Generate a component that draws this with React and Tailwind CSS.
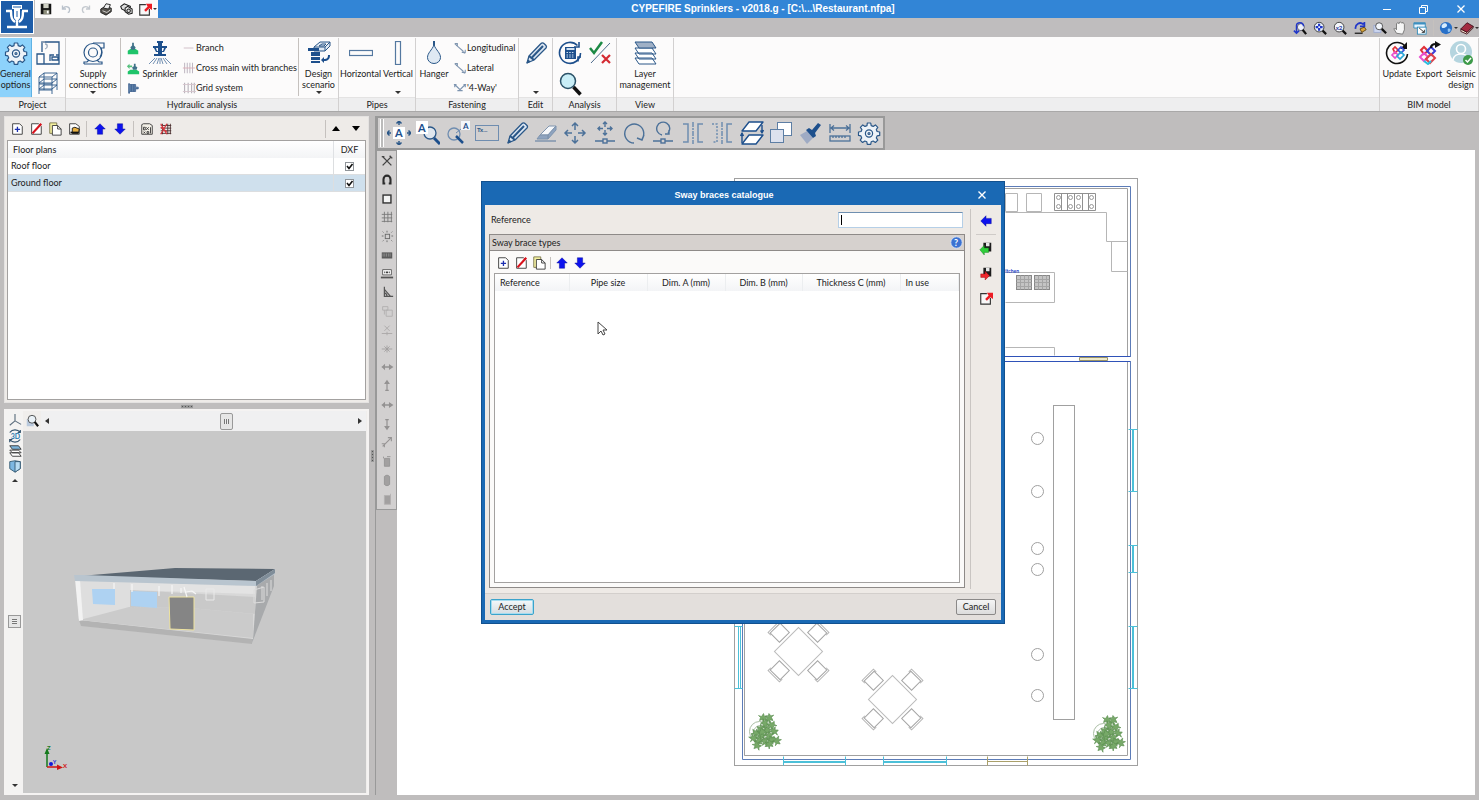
import { useState } from 'react'

const NAVY = '#2a5788'

// 24px line icons used by the ribbon and the editing toolbar
const big = {
  gear: (
    <g fill="none" stroke={NAVY} strokeWidth="1.2" strokeLinejoin="round">
      <path d="M10.3 2h3.4l.5 2.6 2 .8 2.2-1.5 2.4 2.4-1.5 2.2.8 2 2.6.5v3.4l-2.6.5-.8 2 1.5 2.2-2.4 2.4-2.2-1.5-2 .8-.5 2.6h-3.4l-.5-2.6-2-.8-2.2 1.5-2.4-2.4 1.5-2.2-.8-2L1.5 14.4V11l2.6-.5.8-2L3.4 6.3l2.4-2.4L8 5.4l2-.8z" fill="#eef3f8" />
      <circle cx="12" cy="12.5" r="3.6" />
      <circle cx="12" cy="12.5" r="1" />
    </g>
  ),
  plan: (
    <g fill="none" stroke={NAVY} strokeWidth="1.3">
      <path d="M6 11V1h17v22H1V13h7v7M8 20v3M14 20v-6h4M23 14h-3M16 16h6v3h-6z" />
      <path d="M6 1h3M9 3c3 0 3 4 0 5" stroke="#9aa9ba" />
    </g>
  ),
  frame: (
    <path d="M3 23V6l5-4h13v17M3 6h13v17M16 6l5-4M3 12h13l5-4M3 18h13l5-4M3 12l5-4M3 18l5-4M8 2v17M3 13h13M3 19h13M8 8h13M8 14h13" fill="none" stroke={NAVY} strokeWidth="0.9" />
  ),
  pump: (
    <g fill="none" stroke={NAVY} strokeWidth="1.2">
      <path d="M12 2h11v5h-3M3 23h18v-2h-3l-2-2M3 23v-2h3l2-2" />
      <circle cx="12" cy="11.5" r="9" />
      <circle cx="12" cy="11.5" r="4.5" />
      <path d="M20 7c1 3 1 6-1 9" />
    </g>
  ),
  sprinkler: (
    <g>
      <path d="M9 0h6v2h-1v3h5v2h-1l-2 4h-2v2h4v2H6v-2h4v-2H8L6 7H5V5h5V2H9zM8 7l1 3h1V7zM14 7v3h1l1-3z" fill="#1d4f8c" />
      <path d="M7 17l-6 6M9 17l-4 6M11 17l-2 6M12 17v6M13 17l2 6M15 17l4 6M17 17l6 6" stroke="#7592b4" fill="none" />
    </g>
  ),
  design: (
    <g>
      <path d="M7 6l6-5h10v4l-5 5H7zM7 6h11l5-5M18 6v4M12 5l3-2h4l-2 2z" fill="#dfe8f2" stroke={NAVY} />
      <path d="M1 7h11v3H1zM4 11h9v4H4zM4 16h9v3H4zM4 20h9v2H4z" fill="#1d4f8c" />
      <path d="M23 14c0 4-2 6-6 6v2l-3-3 3-3v2c3 0 4-1 4-4z" fill="#1d4f8c" />
    </g>
  ),
  horizontal: <rect x="0.5" y="9.5" width="23" height="5" fill="none" stroke="#5478a0" strokeWidth="1.2" />,
  vertical: <rect x="9.5" y="0.5" width="5" height="23" fill="none" stroke="#5478a0" strokeWidth="1.2" />,
  hanger: (
    <g fill="none" stroke={NAVY}>
      <path d="M12 0v5" strokeWidth="2" />
      <path d="M12 4C10 9 5.5 12 5.5 16.5a6.5 6 0 0 0 13 0C18.5 12 14 9 12 4z" fill="#dfe9f3" />
    </g>
  ),
  pencil: (
    <g stroke={NAVY} strokeLinejoin="round">
      <path d="M3 22l2-7L17 2.5a2 2 0 0 1 3 0l2 2a2 2 0 0 1 0 2.5L10 19z" fill="#dce6f2" strokeWidth="1.3" />
      <path d="M5 15l5 4M7.5 17L19 5" strokeWidth="2" fill="none" />
      <path d="M3 22l1-3 2 1.5z" fill={NAVY} />
    </g>
  ),
  calc: (
    <g fill="none" stroke="#1d4f8c" strokeWidth="1.6">
      <path d="M19.5 4.5A10.5 10.5 0 1 0 22.5 12M21 1v5h-5" />
      <path d="M20 20.5V16h3" />
      <rect x="7" y="6" width="11" height="12" fill="#1d4f8c" stroke="none" />
      <path d="M8.5 8h8" stroke="#cfe0f2" strokeWidth="2" />
      <path d="M8.5 11.5h8M8.5 14h8M8.5 16h8" stroke="#cfe0f2" strokeWidth="1" strokeDasharray="1.5 1.2" />
    </g>
  ),
  checks: (
    <g fill="none">
      <path d="M2 7l4 5 8-11" stroke="#1d8a45" strokeWidth="2.5" />
      <path d="M3 22L22 2" stroke="#4d6b8c" strokeWidth="1" />
      <path d="M14 14l8 8M22 14l-8 8" stroke="#d42a32" strokeWidth="2.2" />
    </g>
  ),
  magnifier: (
    <g>
      <circle cx="10" cy="9" r="7.5" fill="#c9eef7" stroke="#2b5268" strokeWidth="1.5" />
      <path d="M15.5 15l7 7.5" stroke="#111" strokeWidth="3.5" />
    </g>
  ),
  layers: (
    <g stroke={NAVY} strokeLinejoin="round">
      <path d="M2 17l4 6h17l-4-6zM2 12l4 6h17l-4-6zM2 7l4 6h17l-4-6z" fill="#fff" />
      <path d="M2 1h17l4 6H6z" fill="#9fb0c6" />
    </g>
  ),
  update: (
    <g fill="none">
      <path d="M21 6.5A10.5 10.5 0 1 0 22.5 13" stroke="#111" strokeWidth="1.6" />
      <path d="M22 1v7h-7z" fill="#111" />
      <g strokeWidth="1.7">
        <path d="M8 8l2-2 3 3-3 3z" stroke="#e03038" />
        <path d="M13 9l3-3 3 3-3 3z" stroke="#3b4fd8" />
        <path d="M7 14l3-3 3 3-3 3z" stroke="#e94fd0" />
        <path d="M12 15l4-4 3 3-4 4z" stroke="#2aa9d8" />
      </g>
    </g>
  ),
  export: (
    <g fill="none">
      <g strokeWidth="2">
        <path d="M4 9l3-3 4 4-4 3z" stroke="#e03038" />
        <path d="M10 10l4-4 4 4-4 4z" stroke="#3b3fd8" />
        <path d="M3 16l4-4 4 4-4 4z" stroke="#e94fd0" />
        <path d="M9 18l5-5 4 4-5 5z" stroke="#e0404a" />
        <path d="M7 20l4 3 3-3" stroke="#2ac0e0" />
      </g>
      <path d="M14 7c0-3 2-4 5-4" stroke="#111" strokeWidth="2.2" />
      <path d="M18 0l6 3.5-6 3.5z" fill="#111" />
    </g>
  ),
  seismic: (
    <g>
      <circle cx="12" cy="11" r="11" fill="#b5d5df" />
      <circle cx="12" cy="8" r="4.5" fill="#b5d5df" stroke="#fff" strokeWidth="1.6" />
      <path d="M4 19c1-8 15-8 16 0" fill="#b5d5df" stroke="#fff" strokeWidth="1.6" />
      <circle cx="19" cy="19" r="5" fill="#3d9a49" />
      <path d="M16.5 19l2 2 3.5-4" fill="none" stroke="#fff" strokeWidth="1.5" />
    </g>
  ),
  textMove: (
    <g fill="none" stroke={NAVY} strokeWidth="1.5">
      <rect x="6" y="6" width="12" height="12" fill="#fff" stroke="none" />
      <path d="M12 0v4M9.5 2.5L12 0l2.5 2.5M12 20v4M9.5 21.5L12 24l2.5-2.5M0 12h4M2.5 9.5L0 12l2.5 2.5M20 12h4M21.5 9.5L24 12l-2.5 2.5" />
      <text x="8" y="16" fontSize="11" fontWeight="bold" fill="#1d4f8c" stroke="none">A</text>
    </g>
  ),
  textFind: (
    <g>
      <circle cx="14" cy="12" r="6" fill="#dfe6ee" stroke={NAVY} strokeWidth="1.3" />
      <path d="M0 0h12v13H0z" fill="#fff" />
      <text x="2" y="11" fontSize="11" fontWeight="bold" fill="#1d4f8c">A</text>
      <path d="M18 17l6 6" stroke="#1d4f8c" strokeWidth="3" />
    </g>
  ),
  textSearch: (
    <g>
      <circle cx="8" cy="13" r="6" fill="none" stroke="#6f8db0" strokeWidth="1.3" />
      <path d="M10 15l7 7" stroke="#1d4f8c" strokeWidth="2.5" />
      <path d="M10 12l5-4" stroke="#6f8db0" />
      <rect x="15" y="0" width="9" height="9" fill="#f4f7fa" />
      <text x="17" y="8" fontSize="8" fontWeight="bold" fill="#1d4f8c">A</text>
    </g>
  ),
  textBox: (
    <g>
      <rect x="0.5" y="4.5" width="23" height="15" fill="none" stroke="#6f8db0" />
      <text x="2" y="11" fontSize="6" fontWeight="bold" fill={NAVY}>Tx...</text>
    </g>
  ),
  eraser: (
    <g stroke="#7f94ae">
      <path d="M6 14l9-9h7l-8 9z" fill="#f5f7fa" />
      <path d="M6 14h8v4H3zM14 14l8-9v4l-8 9z" fill="#8ea3bf" />
      <path d="M1 20h21" strokeWidth="1.5" />
    </g>
  ),
  move: (
    <path d="M12 2v7M12 15v7M2 12h7M15 12h7M9 5l3-3 3 3M9 19l3 3 3-3M5 9l-3 3 3 3M19 9l3 3-3 3" fill="none" stroke="#4c7199" strokeWidth="1.5" />
  ),
  moveNode: (
    <g fill="none" stroke="#4c7199" strokeWidth="1.4">
      <path d="M12 1v5M12 9v5M5 7.5h5M14 7.5h5M10 3l2-2 2 2M10 12l2 2 2-2M7 5.5l-2 2 2 2M17 5.5l2 2-2 2M2 20h8M14 20h8" />
      <rect x="10" y="18" width="4" height="4" />
    </g>
  ),
  rotate: <path d="M12 22a9.5 9.5 0 1 1 8-4M22 14l-2 5-5-2" fill="none" stroke="#4c7199" strokeWidth="1.4" />,
  rotateNode: (
    <g fill="none" stroke="#4c7199" strokeWidth="1.4">
      <path d="M11 14a6.5 6.5 0 1 1 6-2M18 9v4h-4M2 20h8M14 20h8" />
      <rect x="10" y="18" width="4" height="4" />
    </g>
  ),
  mirror: (
    <g fill="none" stroke="#6f8db0" strokeWidth="1.5">
      <path d="M2 3h5v18H2M22 3h-5v18h5" />
      <path d="M12 1v22" strokeDasharray="5 1 2 1" />
    </g>
  ),
  mirrorCopy: (
    <g fill="none" stroke="#6f8db0" strokeWidth="1.5">
      <path d="M2 3h5v18H2" strokeDasharray="2 1.5" />
      <path d="M22 3h-5v18h5" />
      <path d="M12 1v22" strokeDasharray="5 1 2 1" />
    </g>
  ),
  swapLayers: (
    <g fill="#fff" stroke="#1d4f8c" strokeWidth="1.4" strokeLinejoin="round">
      <path d="M2 10L9 1h14l-7 9zM2 23l7-9h14l-7 9z" />
      <path d="M2 14v8M0.5 15L2 12l1.5 3M22 4v8M20.5 9.5L22 12l1.5-3" fill="none" />
    </g>
  ),
  copySquares: (
    <g stroke="#5d7ea4">
      <rect x="8.5" y="1.5" width="14" height="13" fill="#fff" />
      <rect x="1.5" y="8.5" width="13" height="13" fill="#dce1ee" />
    </g>
  ),
  brush: (
    <g>
      <path d="M2 14l7-4 6 7-6 6z" fill="#9fabc4" />
      <path d="M8 9l3-2 3 2 6-7 3 2-6 8 1 3-3 2z" fill="#1d4f8c" />
    </g>
  ),
  measure: (
    <g fill="none" stroke="#4c7199" strokeWidth="1.3">
      <path d="M2 3v9M22 3v9M3 7h18M6 4.5L3 7l3 2.5M18 4.5L21 7l-3 2.5" />
      <rect x="2" y="15" width="20" height="5" />
      <path d="M5 15v2M8 15v2M11 15v2M14 15v2M17 15v2" />
    </g>
  ),
}

// 16px icons
const small = {
  save: (
    <g>
      <path d="M2 2h12v12H2z" fill="#141414" />
      <path d="M5 2h6v5H5z" fill="#cfd0c4" />
      <path d="M5 9h7v5H5z" fill="#8b8c7a" />
      <path d="M9 10h2v3H9z" fill="#fff" />
    </g>
  ),
  undo: <path d="M4 4v4h4M4.5 7.5C7 4 13 5 12 10c0 1-1 2-2 2" fill="none" stroke="#b9c1cb" strokeWidth="1.5" />,
  redo: <path d="M12 4v4H8M11.5 7.5C9 4 3 5 4 10c0 1 1 2 2 2" fill="none" stroke="#c3c8ce" strokeWidth="1.5" />,
  printer: (
    <g stroke="#1b1b1b">
      <path d="M2 8l5-3 7 2v4l-6 4-6-3z" fill="#55524d" />
      <path d="M5 7l3-5 5 1-2 5z" fill="#eee" />
      <path d="M4 10l5 2 4-3" stroke="#ddd" fill="none" />
    </g>
  ),
  printPreview: (
    <g fill="#ddd" stroke="#1b1b1b" strokeWidth="1.2">
      <path d="M2 5l4-3 7 3-1 4-5 1-4-2z" />
      <path d="M7 7l3-2 5 3v5l-4 1-4-3z" fill="#eee" />
      <circle cx="11" cy="10" r="2" />
    </g>
  ),
  exportDoc: (
    <g>
      <path d="M9 3H2v12h11V8" fill="#f8f8f8" stroke="#333" strokeWidth="1.3" />
      <path d="M7 9l4-4-2-3h7v7l-3-2-4 4z" fill="#ec1c24" />
    </g>
  ),
  add: (
    <g>
      <path d="M3 2h8l3 3v9H3z" fill="#fff" stroke="#333" />
      <path d="M8.5 5.5v6M5.5 8.5h6" stroke="#1c2fb0" strokeWidth="1.5" />
    </g>
  ),
  remove: (
    <g>
      <path d="M3 2h8l3 3v9H3z" fill="#fff" stroke="#333" />
      <path d="M14 2L4 13" stroke="#d8121c" strokeWidth="2.5" />
    </g>
  ),
  duplicate: (
    <g>
      <path d="M2 1h8v12H2z" fill="#f4f0a0" stroke="#77744a" />
      <path d="M5 4h6l4 4v7H5z" fill="#fff" stroke="#333" />
      <path d="M11 4v4h4" fill="none" stroke="#333" />
    </g>
  ),
  edit: (
    <g>
      <path d="M3 2h7l4 3v9H3z" fill="#fff" stroke="#333" />
      <path d="M6 7l3-1 5 2-1 5H6z" fill="#e8b040" stroke="#111" />
      <path d="M4 12h9" stroke="#111" strokeWidth="2" />
    </g>
  ),
  up: <path d="M8 2l6 6h-3v6H5V8H2z" fill="#0d12ee" stroke="#050a90" strokeWidth="0.5" />,
  down: <path d="M8 14l6-6h-3V2H5v6H2z" fill="#0d12ee" stroke="#050a90" strokeWidth="0.5" />,
  left: <path d="M2 8l6-6v3h6v6H8v3z" fill="#0d12ee" stroke="#050a90" strokeWidth="0.5" />,
  dxf: (
    <g fill="none" stroke="#333">
      <path d="M2 14V3l2-1h7l3 2v10z" fill="#f2efe6" />
      <path d="M4 6h2v3H4zM7 6l3 3M10 6L7 9M12 6v7M4 11l2 2M6 11l-2 2M8 11h2v2H8z" />
    </g>
  ),
  grid: (
    <g stroke="#4a3030" fill="none">
      <path d="M2 4h12M2 7h12M2 10h12M2 13h12M10 2v12M13 2v12M4 2v12" />
      <path d="M2 2l7 12M9 2L2 14M2 6l7 5" stroke="#d8343c" strokeWidth="1.4" />
    </g>
  ),
  importDisk: (
    <g>
      <path d="M5 2h9v10H5z" fill="#1d1d1d" />
      <path d="M8 2h4v4H8z" fill="#e7e7e7" />
      <path d="M1 10l5-5v3h5v5H6v3z" fill="#2fcf3a" stroke="#127a1b" strokeWidth="0.5" />
    </g>
  ),
  exportDisk: (
    <g>
      <path d="M5 2h9v10H5z" fill="#1d1d1d" />
      <path d="M8 2h4v4H8z" fill="#e7e7e7" />
      <path d="M12 11L7 6v3H2v4h5v3z" fill="#f0282e" stroke="#90070c" strokeWidth="0.5" />
    </g>
  ),
  hydrantA: (
    <g>
      <path d="M2 15v-4l3-2h6l3 2v4z" fill="#1fc46a" />
      <path d="M7 2h2v3l2 2-1 3H6L5 7l2-2z" fill="#3f7289" />
    </g>
  ),
  hydrantB: (
    <g>
      <path d="M2 15v-3l3-2h7l3 2v3z" fill="#1fc46a" />
      <path d="M9 3h2v3l2 1-1 3H8L7 7l2-1z" fill="#3f7289" />
      <path d="M1 6l3-3v2h3v2H4v2z" fill="#55c07c" />
    </g>
  ),
  valve: <path d="M3 3h1v1h7v3h3v2h-3v3H4v2H3zM6 4v8M9 4v8" fill="#5f80a8" stroke="#315687" strokeWidth="0.8" />,
  branch: <path d="M2 8h11" stroke="#d3c3cb" strokeWidth="1.2" />,
  crossMain: (
    <g stroke="#b5adb9">
      <path d="M3 2v12M6 2v12M9 2v12M12 2v12" />
      <path d="M1 8h14" stroke="#d9a9b4" />
    </g>
  ),
  gridSystem: (
    <g stroke="#a39fa9">
      <path d="M3 2v12M7 2v12M11 2v12M14 2v12" />
      <path d="M1 4h15M1 12h15" stroke="#d5c4cb" />
    </g>
  ),
  brace: <path d="M2 3h3v3M4 5l8 7M10 13h4v-3M11 13l3 1M2 3l3 3" fill="none" stroke="#8096b0" strokeWidth="1.2" />,
  fourWay: <path d="M2 4l6 6 6-6M1 4h3M12 4h3M5 11h6M2 4v3M14 4v3" fill="none" stroke="#7d94b0" strokeWidth="1.3" />,
  zoomPrev: (
    <g fill="none" stroke="#2238c8" strokeWidth="1.7">
      <circle cx="9" cy="7" r="4" stroke="#556" strokeWidth="1" fill="#edf1fa" />
      <path d="M4 14V5c0-4 8-4 8 1M1 11l3 3 3-3" />
      <path d="M11 10l4 5" stroke="#111" strokeWidth="2.5" />
    </g>
  ),
  zoomAll: (
    <g>
      <circle cx="7" cy="7" r="5.5" fill="#e8f0fb" stroke="#333" />
      <path d="M7 3v8M3 7h8" stroke="#2238c8" strokeWidth="2.5" strokeDasharray="3 2" />
      <path d="M11 11l4 4" stroke="#111" strokeWidth="2.5" />
    </g>
  ),
  zoomTwo: (
    <g>
      <circle cx="7" cy="7" r="5.5" fill="#f4f6fb" stroke="#333" />
      <text x="3" y="10" fontSize="7" fontWeight="bold" fill="#2b3ea5">x2</text>
      <path d="M11 11l4 4" stroke="#111" strokeWidth="2.5" />
    </g>
  ),
  redraw: (
    <g fill="none">
      <path d="M12 4C8 0 2 4 3 9M13 1v5H8" stroke="#2238c8" strokeWidth="2" />
      <path d="M2 14h9" stroke="#222" strokeWidth="1.5" />
      <path d="M8 9l5-2 2 3-5 3z" fill="#dba63c" stroke="#594010" />
    </g>
  ),
  zoomWindow: (
    <g>
      <rect x="1" y="5" width="8" height="8" fill="#ccd6f0" stroke="#9daad0" />
      <circle cx="7" cy="6" r="4" fill="#f2f6fc" stroke="#444" />
      <path d="M10 9l5 5" stroke="#111" strokeWidth="2.5" />
    </g>
  ),
  hand: (
    <path d="M4 14L1 9l1-1 2 2V3l1.5-1L7 3V2l1.5-1L10 2.5l1.5-1L13 4v6l-2 5z" fill="#f6f6f6" stroke="#666" strokeWidth="0.9" />
  ),
  windowIcon: (
    <g>
      <path d="M1 2h13v6H1z" fill="#e8f5ff" stroke="#2b88b8" />
      <path d="M1 2h13v2H1z" fill="#3d8fc0" />
      <rect x="5" y="7" width="10" height="8" fill="#fff" stroke="#2b88b8" />
      <path d="M7 8l6 5M13 10v3h-3" stroke="#222" fill="none" />
    </g>
  ),
  globe: (
    <g>
      <circle cx="8" cy="8" r="7" fill="#2870c8" />
      <path d="M3 5c2-3 5-3 6-1S7 8 5 8 3 7 3 5z" fill="#d6ecff" />
      <path d="M10 9c2-1 4 0 3 2s-3 2-3 0z" fill="#8fc4f5" />
    </g>
  ),
  book: (
    <g stroke="#3d0f18">
      <path d="M1 9v3l7 3 7-7V6l-7 7z" fill="#f3e4d0" />
      <path d="M1 9l7-7 7 4-7 7z" fill="#a32b40" />
    </g>
  ),
  axes: <path d="M8 1v8M8 9l-6 5M8 9l7 4" fill="none" stroke="#5e6f7f" strokeWidth="1.3" />,
  zoom3d: (
    <g>
      <path d="M2 6h8v8H2z" fill="#b9c9dd" />
      <circle cx="8" cy="6" r="4.5" fill="#eaf2f8" stroke="#444" />
      <path d="M11 9l4 5" stroke="#111" strokeWidth="2.5" />
    </g>
  ),
  view3d: (
    <g fill="none" stroke="#33536e" strokeWidth="1.4">
      <path d="M2 4c3-4 9-4 12 0M14 12c-3 4-9 4-12 0M14 1v3h-3M2 15v-3h3" />
      <text x="3" y="11" fontSize="8" fontWeight="bold" fill="#2879b0" stroke="none">3D</text>
    </g>
  ),
  layers3d: (
    <g stroke="#333" strokeLinejoin="round">
      <path d="M2 10l3 4h10l-3-4zM2 7l3 3h10l-3-3z" fill="#fff" />
      <path d="M2 2h10l3 4H5z" fill="#7db5dc" />
    </g>
  ),
  shield: (
    <g stroke="#31566f">
      <path d="M2 3l6-1 6 1v8l-6 4-6-4z" fill="#7db7e2" />
      <path d="M8 3l6 0v8l-6 4z" fill="#b8dcf3" />
    </g>
  ),
  tools: <path d="M3 3l10 10M13 3L3 13M11 2l3 3M2 3h3" stroke="#444" strokeWidth="1.6" fill="none" />,
  magnet: <path d="M4 13V7a4 4 0 0 1 8 0v6M3 12h3M10 12h3" stroke="#2c2c2c" strokeWidth="2.4" fill="none" />,
  square: <rect x="3.5" y="3.5" width="9" height="9" stroke="#333" strokeWidth="1.6" fill="#f4f4f4" />,
  mesh: <path d="M5 2v12M9 2v12M13 2v12M2 5h12M2 9h12M2 13h12" stroke="#777" fill="none" />,
  snap: (
    <g stroke="#666" fill="none">
      <rect x="6" y="6" width="5" height="5" />
      <path d="M3 3l1 1M8 2v2M14 3l-1 1M2 8h2M13 8h2M3 14l1-1M8 13v2M14 14l-1-1" />
    </g>
  ),
  keyboard: (
    <g>
      <path d="M2 5h12v7H2z" fill="#5b5b5b" />
      <path d="M3 7h10M3 9h10" stroke="#bbb" strokeDasharray="1 1" />
    </g>
  ),
  ruler: (
    <g>
      <path d="M3 3h10v6H3z" fill="#fff" stroke="#555" />
      <path d="M5 6h1M7 6h2M10 6h1" stroke="#222" strokeWidth="2" />
      <path d="M1 12h14" stroke="#555" strokeWidth="2" />
    </g>
  ),
  angle: <path d="M5 2v11h10M5 5l7 8M8 13a4 4 0 0 0-3-4" stroke="#555" strokeWidth="1.4" fill="none" />,
  ghostFrame: <path d="M3 3h6v4H3zM7 7h7v7H7zM5 7v5" stroke="#b0aeae" fill="none" />,
  ghostCross: <path d="M5 3l6 6M11 3L5 9M2 12h12M8 10v4" stroke="#a9a7a7" fill="none" />,
  ghostStar: <path d="M2 8h12M5 5l6 6M11 5l-6 6M8 4v8" stroke="#a09e9e" fill="none" />,
  ghostH: <path d="M2 8h12M5 6L3 8l2 2zM11 6l3 2-3 2z" stroke="#949292" strokeWidth="1.5" fill="#949292" />,
  ghostUp: <path d="M8 4v9M6 13h4M6 5l2-3 2 3z" stroke="#949292" strokeWidth="1.4" fill="#949292" />,
  ghostDown: <path d="M8 3v9M6 3h4M6 11l2 3 2-3z" stroke="#949292" strokeWidth="1.4" fill="#949292" />,
  ghostLine: <path d="M3 13L13 3M9 3h4v4M2 10h3v4" stroke="#969494" strokeWidth="1.3" fill="none" />,
  ghostBox: <path d="M5 5h6v9H5zM4 3v2M8 3h4" fill="#a2a0a0" stroke="#949292" />,
  ghostBarrel: <path d="M5 4c2-2 4-2 6 0v9c-2 2-4 2-6 0z" fill="#a2a0a0" stroke="#949292" />,
  ghostPanel: <path d="M5 4h7v10H5zM12 2v12" fill="#a2a0a0" stroke="#b2b0b0" />,
  help: (
    <g>
      <circle cx="8" cy="8" r="7" fill="#3b72d2" stroke="#dfe9fa" />
      <text x="5" y="12" fontSize="11" fontWeight="bold" fill="#fff">?</text>
    </g>
  ),
}

function Big({ name }) {
  return <svg width="24" height="24" viewBox="0 0 24 24" className="shrink-0" aria-hidden="true">{big[name]}</svg>
}

function Small({ name, className = 'size-[14px]' }) {
  return <svg viewBox="0 0 16 16" className={`shrink-0 ${className}`} aria-hidden="true">{small[name]}</svg>
}

function Caret() {
  return <svg width="6" height="3" viewBox="0 0 6 3" className="fill-[#333] shrink-0" aria-hidden="true"><path d="M0 0h6L3 3z" /></svg>
}

function SmallCaret() {
  return <svg width="4" height="2" viewBox="0 0 4 2" className="fill-[#333] shrink-0" aria-hidden="true"><path d="M0 0h4L2 2z" /></svg>
}

function IconButton({ name, label, className = 'w-5' }) {
  return (
    <button type="button" aria-label={label || name} className={`flex items-center justify-center shrink-0 ${className}`}>
      <Small name={name} />
    </button>
  )
}

function Divider({ className = 'h-4 mx-[3px]' }) {
  return <span className={`w-px bg-[#c5c1be] shrink-0 ${className}`} />
}

function RibbonButton({ icon, lines, caret, active, className }) {
  return (
    <button
      type="button"
      className={`flex flex-col items-center pt-[3px] shrink-0 leading-[11px] ${active ? 'bg-[#8dd2fb] border-r border-[#5fb2e4]' : ''} ${className}`}
    >
      <Big name={icon} />
      <span className="mt-[3px] h-[23px] whitespace-nowrap">
        {lines.map(l => <span key={l} className="block">{l}</span>)}
      </span>
      {caret && <Caret />}
    </button>
  )
}

function RibbonGroup({ title, className, children }) {
  return (
    <section className={`flex flex-col border-r border-[#d2d0d0] shrink-0 ${className}`}>
      <div className="flex h-[60px]">{children}</div>
      <h2 className="h-[14px] flex items-center justify-center bg-[#eeeeef] border-t border-[#e4e3e3]">{title}</h2>
    </section>
  )
}

function RibbonRow({ icon, label }) {
  return (
    <button type="button" className="flex items-center h-5 whitespace-nowrap">
      <Small name={icon} />{label}
    </button>
  )
}

function Header() {
  return (
    <header className="flex h-[37px] bg-[#bfbdbe] shrink-0">
      <div className="size-[34px] bg-white p-px shrink-0">
        <svg viewBox="0 0 32 32" className="size-full" aria-hidden="true">
          <rect width="32" height="32" fill="#1d5ca8" />
          <path d="M5 10h6M21 10h6M10 10c0 7 1 9 4 11M22 10c0 7-1 9-4 11M16 20v6M6 26h20" stroke="#fff" strokeWidth="2.4" fill="none" />
          <path d="M11 4h10v4h-2v9l-3 4-3-4V8h-2z" fill="#fff" />
          <path d="M12 6h8M16 10v6" stroke="#1d5ca8" />
        </svg>
      </div>
      <div className="flex-1 flex flex-col">
        <div className="flex h-[18px] bg-[#3285d6]">
          <nav aria-label="Quick access" className="flex items-center bg-[#fbfafa] pl-px border-l border-[#bfbdbe] w-[124px]">
            {['save', 'undo', 'redo', 'printer', 'printPreview'].map(n => <IconButton key={n} name={n} />)}
            <IconButton name="exportDoc" className="w-[17px]" />
            <SmallCaret />
          </nav>
          <h1 className="flex-1 text-center text-white font-bold text-[10px] leading-[17px] font-['Liberation_Sans',Arial,sans-serif]">
            CYPEFIRE Sprinklers - v2018.g - [C:\...\Restaurant.nfpa]
          </h1>
          <div className="flex">
            <button type="button" aria-label="Minimize" className="w-[37px] flex items-center justify-center"><span className="w-2 h-px bg-white" /></button>
            <button type="button" aria-label="Restore" className="w-[37px] flex items-center justify-center">
              <svg width="9" height="9" fill="none" stroke="#fff"><path d="M0.5 2.5h6v6h-6zM2.5 2V0.5h6v6H7" /></svg>
            </button>
            <button type="button" aria-label="Close" className="w-[37px] flex items-center justify-center">
              <svg width="8" height="8" stroke="#fff" strokeWidth="1.3"><path d="M0.5 0.5l7 7M7.5 0.5l-7 7" /></svg>
            </button>
          </div>
        </div>
        <div className="flex-1 flex items-center justify-end">
          {['zoomPrev', 'zoomAll', 'zoomTwo', 'redraw', 'zoomWindow', 'hand', 'windowIcon'].map(n => <IconButton key={n} name={n} />)}
          <Divider className="h-4 mx-[3px] bg-[#999]" />
          <IconButton name="globe" className="w-[17px]" /><SmallCaret />
          <IconButton name="book" className="w-[17px]" /><SmallCaret />
        </div>
      </div>
    </header>
  )
}

function Ribbon() {
  return (
    <div className="flex h-[75px] pt-px bg-[#fcfbfb] border-b border-[#a9a8a8] shrink-0 overflow-hidden">
      <RibbonGroup title="Project" className="w-[66px]">
        <RibbonButton icon="gear" lines={['General', 'options']} active className="w-8" />
        <div className="flex flex-col gap-[6px] pt-[3px] pl-1">
          <button type="button" aria-label="Plan views"><Big name="plan" /></button>
          <button type="button" aria-label="Structure"><Big name="frame" /></button>
        </div>
      </RibbonGroup>

      <RibbonGroup title="Hydraulic analysis" className="w-[273px]">
        <RibbonButton icon="pump" lines={['Supply', 'connections']} caret className="w-[54px]" />
        <Divider className="h-[58px]" />
        <div className="flex flex-col pl-1">
          {['hydrantA', 'hydrantB', 'valve'].map(n => <IconButton key={n} name={n} className="w-4 h-5" />)}
        </div>
        <RibbonButton icon="sprinkler" lines={['Sprinkler']} className="w-[38px]" />
        <div className="flex flex-col flex-1 min-w-0 pl-[3px]">
          <RibbonRow icon="branch" label="Branch" />
          <RibbonRow icon="crossMain" label="Cross main with branches" />
          <RibbonRow icon="gridSystem" label="Grid system" />
        </div>
        <Divider className="h-[58px]" />
        <RibbonButton icon="design" lines={['Design', 'scenario']} caret className="w-[39px]" />
      </RibbonGroup>

      <RibbonGroup title="Pipes" className="w-[77px]">
        <RibbonButton icon="horizontal" lines={['Horizontal']} className="w-[43px]" />
        <RibbonButton icon="vertical" lines={['Vertical']} className="w-8" caret />
      </RibbonGroup>

      <RibbonGroup title="Fastening" className="w-[103px]">
        <RibbonButton icon="hanger" lines={['Hanger']} className="w-[36px]" />
        <div className="flex flex-col pl-px">
          <RibbonRow icon="brace" label="Longitudinal" />
          <RibbonRow icon="brace" label="Lateral" />
          <RibbonRow icon="fourWay" label="'4-Way'" />
        </div>
      </RibbonGroup>

      <RibbonGroup title="Edit" className="w-[34px]">
        <RibbonButton icon="pencil" lines={[]} caret className="w-full" />
      </RibbonGroup>

      <RibbonGroup title="Analysis" className="w-[64px]">
        <div className="grid grid-cols-2 gap-x-[6px] gap-y-[7px] pt-[3px] pl-[5px] content-start">
          <button type="button" aria-label="Calculate"><Big name="calc" /></button>
          <button type="button" aria-label="Check"><Big name="checks" /></button>
          <button type="button" aria-label="Search"><Big name="magnifier" /></button>
        </div>
      </RibbonGroup>

      <RibbonGroup title="View" className="w-[57px]">
        <RibbonButton icon="layers" lines={['Layer', 'management']} className="w-full" />
      </RibbonGroup>

      <div className="flex-1 flex flex-col justify-end border-r border-[#d2d0d0]">
        <div className="h-[14px] bg-[#eeeeef] border-t border-[#e4e3e3]" />
      </div>

      <RibbonGroup title="BIM model" className="w-[99px]">
        <RibbonButton icon="update" lines={['Update']} className="w-[34px]" />
        <RibbonButton icon="export" lines={['Export']} className="w-[30px]" />
        <RibbonButton icon="seismic" lines={['Seismic', 'design']} className="w-[34px]" />
      </RibbonGroup>
    </div>
  )
}

function FloorPlans() {
  const [floors, setFloors] = useState([
    { name: 'Roof floor', dxf: true },
    { name: 'Ground floor', dxf: true },
  ])
  const [selected, setSelected] = useState('Ground floor')

  const toggle = (name) => setFloors(fs => fs.map(f => (f.name === name ? { ...f, dxf: !f.dxf } : f)))

  return (
    <section className="h-[287px] flex flex-col bg-[#eeebe8] border border-[#e4e2e1] px-[2px] pb-[2px] shrink-0">
      <div className="h-[23px] flex items-center">
        {['add', 'remove', 'duplicate', 'edit'].map(n => <IconButton key={n} name={n} className="w-[19px]" />)}
        <Divider />
        <IconButton name="up" /><IconButton name="down" />
        <Divider />
        <IconButton name="dxf" className="w-[19px]" /><IconButton name="grid" className="w-[19px]" />
        <div className="flex-1" />
        <Divider className="h-[18px]" />
        {['M0 5h8L4 0z', 'M0 0h8L4 5z'].map(d => (
          <button key={d} type="button" aria-label={d.startsWith('M0 5') ? 'Previous' : 'Next'} className="w-5 flex justify-center">
            <svg width="8" height="5"><path d={d} /></svg>
          </button>
        ))}
      </div>
      <div className="flex-1 bg-white border border-[#a3a1a0]">
        <table className="w-full table-fixed border-separate border-spacing-0">
          <thead>
            <tr className="h-[17px] bg-linear-to-b from-white to-[#f3f4f6]">
              <th className="text-left font-normal pl-[5px]">Floor plans</th>
              <th className="w-8 font-normal border-l border-[#dfe1e4]">DXF</th>
            </tr>
          </thead>
          <tbody>
            {floors.map(f => (
              <tr
                key={f.name}
                onClick={() => setSelected(f.name)}
                className={`h-[17px] ${selected === f.name ? 'bg-[#cfe0ed]' : 'bg-white'}`}
              >
                <td className="pl-[3px] border-b border-[#dcdee0]">{f.name}</td>
                <td className="border-b border-l border-[#dcdee0]">
                  <label className="relative flex justify-center">
                    <input
                      type="checkbox" checked={f.dxf} aria-label={`${f.name} DXF`}
                      onChange={() => toggle(f.name)}
                      className="peer appearance-none size-[9px] bg-white border border-[#8f9499]"
                    />
                    <svg viewBox="0 0 9 9" className="absolute size-[9px] invisible peer-checked:visible" aria-hidden="true">
                      <path d="M2 4l2 2.5L7.5 2" fill="none" stroke="#111" strokeWidth="1.6" />
                    </svg>
                  </label>
                </td>
              </tr>
            ))}
          </tbody>
        </table>
      </div>
    </section>
  )
}

function View3D() {
  return (
    <section className="flex-1 min-h-0 flex bg-[#f0eeec] border-2 border-[#f5f3f2] pr-px">
      <div className="w-[17px] flex flex-col items-center shrink-0 bg-[#f4f3f2]">
        <IconButton name="axes" label="Axes" className="h-[17px]" />
        {['view3d', 'layers3d', 'shield'].map(n => <IconButton key={n} name={n} className="h-[15px]" />)}
        <svg width="6" height="14" viewBox="0 0 6 14" className="shrink-0"><path d="M0 9h6L3 6z" fill="#333" /></svg>
        <input
          type="range" min="0" max="100" defaultValue="46" aria-label="Vertical rotation"
          className="flex-1 min-h-0 w-[17px] appearance-none bg-transparent [writing-mode:vertical-lr] [&::-webkit-slider-thumb]:appearance-none [&::-webkit-slider-thumb]:w-[13px] [&::-webkit-slider-thumb]:h-[13px] [&::-webkit-slider-thumb]:border [&::-webkit-slider-thumb]:border-[#999] [&::-webkit-slider-thumb]:bg-[repeating-linear-gradient(#777_0_1px,#eee_1px_2px)] [&::-webkit-slider-thumb]:bg-[length:5px_5px] [&::-webkit-slider-thumb]:bg-center [&::-webkit-slider-thumb]:bg-no-repeat [&::-webkit-slider-thumb]:bg-[#e6e6e6]"
        />
        <svg width="6" height="14" viewBox="0 0 6 14" className="shrink-0"><path d="M0 5h6L3 8z" fill="#333" /></svg>
      </div>
      <div className="flex-1 min-w-0 flex flex-col">
        <div className="flex h-5 items-center shrink-0">
          <IconButton name="zoom3d" label="Zoom" className="w-[18px]" />
          <div className="flex-1 min-w-0 flex items-center bg-[#f0f0f1] h-full">
            <svg width="12" height="6" viewBox="0 0 12 6" className="shrink-0"><path d="M8 0v6L4 3z" fill="#333" /></svg>
            <input
              type="range" min="0" max="100" defaultValue="58" aria-label="Horizontal rotation"
              className="flex-1 min-w-0 h-5 appearance-none bg-transparent [&::-webkit-slider-thumb]:appearance-none [&::-webkit-slider-thumb]:w-[13px] [&::-webkit-slider-thumb]:h-[17px] [&::-webkit-slider-thumb]:rounded-xs [&::-webkit-slider-thumb]:border [&::-webkit-slider-thumb]:border-[#999] [&::-webkit-slider-thumb]:bg-[repeating-linear-gradient(90deg,#777_0_1px,#eee_1px_2px)] [&::-webkit-slider-thumb]:bg-[length:5px_5px] [&::-webkit-slider-thumb]:bg-center [&::-webkit-slider-thumb]:bg-no-repeat [&::-webkit-slider-thumb]:bg-[#e6e6e6]"
            />
            <svg width="12" height="6" viewBox="0 0 12 6" className="shrink-0"><path d="M4 0v6l4-3z" fill="#333" /></svg>
          </div>
        </div>
        <svg className="flex-1 min-h-0 w-full bg-[#c8c8c8]" role="img" aria-label="3D view">
          <g transform="translate(-23 -431)">
            <path d="M79 620l173 18v6L81 626z" fill="#b3b3b3" />
            <path d="M252 643l22-57v-17l-18 16z" fill="#a8aaac" />
            <path d="M76 580l181 5-4 54-174-19z" fill="#d8d8d8" />
            <path d="M76 580l54 2v26l-51 12z" fill="#dedede" />
            <path d="M80 620l49-13 60 1 64 6v24z" fill="#cbcbcb" />
            <path d="M130 590l125 7v17l-66-6-59-1z" fill="#c5c5c5" opacity="0.8" />
            <path d="M75 579l5 1 3 40-4 1z" fill="#f2f2f2" />
            <path d="M130 582l125 4v8l-125-4z" fill="#e3e3e3" />
            <path d="M92 589h23v16l-22-1z" fill="#aed2f2" />
            <path d="M131 591l26 1v16l-26-2z" fill="#aed2f2" />
            <path d="M169 597h25v33l-24-1z" fill="#858585" stroke="#efe4a0" />
            <path d="M114 583v6M132 584v8M159 586v10M172 585v9M184 587l3 10M186 592l6-1M192 591l4 3M181 588v5" stroke="#f6f6f6" strokeWidth="1.2" />
            <path d="M206 589h8v11h-8z" fill="none" stroke="#e9e9e9" />
            <path d="M80 576l95-8 100 1-19 12z" fill="#5b6772" />
            <path d="M74 575h10l172 6 19-12v5l-19 12-181-5z" fill="#b9c5cf" />
            <path d="M256 581l19-12v4l-19 13z" fill="#7f8d99" />
            <path d="M254 590l10-3v15l-10 1zM262 586v14M267 583v13M271 580v11" fill="none" stroke="#dcdcdc" />
            <path d="M47 767v-17" stroke="#157a1d" strokeWidth="1.5" />
            <path d="M44.5 754l2.5-6 2.5 6z" fill="#157a1d" />
            <path d="M47 767h13" stroke="#d01414" strokeWidth="1.5" />
            <path d="M57 764.5l6 3-6 2.5z" fill="#d01414" />
            <circle cx="51" cy="764" r="2" fill="#1418d8" />
            <text x="47" y="750" fontSize="6" fontWeight="bold" fill="#157a1d">Z</text>
            <text x="53" y="764" fontSize="5" fontWeight="bold" fill="#1418d8">Y</text>
            <text x="63" y="768" fontSize="6" fontWeight="bold" fill="#d01414">X</text>
          </g>
        </svg>
      </div>
    </section>
  )
}

function Table({ x, y }) {
  return (
    <g transform={`translate(${x} ${y}) rotate(45)`} fill="none" stroke="#a5a5a5">
      <rect x="-17" y="-17" width="34" height="34" stroke="#bbb" />
      {[0, 90, 180, 270].map(r => (
        <g key={r} transform={`rotate(${r})`}>
          <rect x="-7" y="-33" width="14" height="13" />
          <path d="M-8 -31v-4h16v4" stroke="#b5b5b5" />
        </g>
      ))}
    </g>
  )
}

const leaves = [[0, -14], [6, -13], [2, -8], [8, -6], [-3, -3], [4, -1], [10, 0], [-8, 2], [-2, 4], [6, 5], [-10, 7], [-5, 9], [2, 10], [8, 9], [13, 9], [-7, 14], [6, 13], [-1, 0]]

function Plant({ x, y }) {
  return (
    <g transform={`translate(${x} ${y})`}>
      <circle cx="-4" cy="0" r="10" fill="none" stroke="#a9bda3" />
      <circle cx="-3" cy="1" r="7" fill="none" stroke="#a9bda3" />
      {leaves.map(([lx, ly]) => (
        <g key={`${lx} ${ly}`} transform={`translate(${lx} ${ly}) rotate(${lx * 20})`}>
          <path d="M0-4l1 3 3-1-2 2 2 3-3-1-1 3-1-3-3 1 1-3-2-2 3 1z" fill="#77a968" stroke="#5c8f51" strokeWidth="0.6" />
        </g>
      ))}
    </g>
  )
}

function PlanDrawing() {
  return (
    <svg className="absolute inset-0 size-full" role="img" aria-label="Floor plan">
      <g transform="translate(-396.500 -149.500)" fill="none" stroke="#a0a0a0">
        <rect x="734" y="178" width="403" height="587" />
        <path d="M744 188h383v168M744 361v394h383V361" />
        <path d="M742 186h388v170H742zM742 361h388v398H742z" stroke="#5c7cb8" />
        <path d="M1004 356h126M1004 361h126" stroke="#2f52b8" />
        <path d="M744 188v567" />
        <path d="M1079 357h28v3h-28z" stroke="#9c9465" fill="#eeeacb" />
        <path d="M1005 193h12v18h-12zM1026 193h15v18h-15zM1005 212h101v29h21M1111 241v30h16M1005 272h49v30h-49M1005 347h49v8" stroke="#b6b6b6" />
        <path d="M1054 193h41v17h-41zM1061 193v17M1067 193v17M1074 193v17M1082 193v17M1088 193v17" stroke="#909090" />
        {[1058, 1070, 1078, 1091].map(cx => [197, 206].map(cy => <circle key={`${cx} ${cy}`} cx={cx} cy={cy} r="2" stroke="#999" />))}
        {[1016, 1034].map(x => (
          <g key={x} stroke="#888">
            <rect x={x} y="275" width="15" height="14" fill="#c4c4c4" />
            <path d={`M${x} 279h15M${x} 282h15M${x} 286h15M${x + 4} 275v14M${x + 8} 275v14M${x + 12} 275v14`} stroke="#a5a5a5" />
          </g>
        ))}
        <text x="1002" y="272" fontSize="5" fontWeight="bold" fill="#1d44c8" stroke="none">kitchen</text>
        <rect x="1053" y="405" width="21" height="314" />
        {[438, 491, 548, 569, 654, 695].map(cy => <circle key={cy} cx="1037" cy={cy} r="6" />)}
        {[[429, 491], [545, 572], [626, 688]].map(([a, b]) => (
          <path key={a} d={`M1128 ${a}h9M1128 ${b}h9M1132 ${a}V${b}M1133 ${a}V${b}`} stroke="#4cc0d8" />
        ))}
        <path d="M734 626h8M734 688h8M738 626v62M740 626v62" stroke="#4cc0d8" />
        {[[783, 845], [883, 946]].map(([a, b]) => (
          <path key={a} d={`M${a} 756v9M${b} 756v9M${a} 761H${b}M${a} 762H${b}`} stroke="#4cc0d8" />
        ))}
        <path d="M987 756v9M1027 756v9M987 761h40" stroke="#aaa06a" />
        <Table x={798} y={651} />
        <Table x={892} y={699} />
        <Plant x={763} y={731} />
        <Plant x={1107} y={733} />
      </g>
    </svg>
  )
}

const editTools = ['textMove', 'textFind', 'textSearch', 'textBox', 'pencil', 'eraser', 'move', 'moveNode', 'rotate', 'rotateNode', 'mirror', 'mirrorCopy', 'swapLayers', 'copySquares', 'brush', 'measure', 'gear']
const snapTools = ['tools', 'magnet', 'square', 'mesh', 'snap', 'keyboard', 'ruler', 'angle', 'ghostFrame', 'ghostCross', 'ghostStar', 'ghostH', 'ghostUp', 'ghostH', 'ghostDown', 'ghostLine', 'ghostBox', 'ghostBarrel', 'ghostPanel']

function Workspace() {
  return (
    <main className="flex-1 min-w-0 flex flex-col border-l border-[#999]">
      <div className="w-[509px] h-[34px] flex items-center px-[2px] bg-[#d2d0d0] border-2 border-[#999]">
        <span className="w-1 h-7 border-x border-white bg-[#bbb]" />
        <div className="flex-1 flex items-center justify-between pl-[3px]">
          {editTools.map(n => <button key={n} type="button" aria-label={n}><Big name={n} /></button>)}
        </div>
      </div>
      <div className="flex-1 min-h-0 flex">
        <div className="w-[21px] h-[360px] flex flex-col items-center justify-between py-[3px] bg-[#d2d0d0] border border-[#999] shrink-0">
          {snapTools.map((n, i) => (
            <button key={i} type="button" aria-label={n}><Small name={n} /></button>
          ))}
        </div>
        <div className="flex-1 relative bg-white overflow-hidden"><PlanDrawing /></div>
      </div>
    </main>
  )
}

const columns = [
  { label: 'Reference', className: 'w-[74px] text-left pl-[5px]' },
  { label: 'Pipe size', className: 'w-[78px]' },
  { label: 'Dim. A (mm)', className: 'w-[78px]' },
  { label: 'Dim. B (mm)', className: 'w-[77px]' },
  { label: 'Thickness C (mm)', className: 'w-[98px]' },
  { label: 'In use', className: 'text-left pl-[5px]' },
]

function SwayBracesDialog() {
  const [reference, setReference] = useState('')

  return (
    <div
      role="dialog" aria-labelledby="dialog-title"
      className="absolute left-[481px] top-[181px] w-[524px] h-[443px] flex flex-col bg-[#1a69b4] border border-[#12518f] px-[3px] pb-[3px]"
    >
      <div className="h-[23px] flex items-center shrink-0 text-white">
        <h2 id="dialog-title" className="flex-1 text-center font-bold text-[9px] pt-[3px] font-['Liberation_Sans',Arial,sans-serif]">Sway braces catalogue</h2>
        <button type="button" aria-label="Close" className="w-[38px] flex justify-center pt-[3px]">
          <svg width="8" height="8" stroke="#fff" strokeWidth="1.4"><path d="M0.5 0.5l7 7M7.5 0.5l-7 7" /></svg>
        </button>
      </div>
      <div className="flex-1 min-h-0 flex bg-[#eeeae6]">
        <div className="flex-1 min-w-0 flex flex-col pl-1 pr-[5px] pb-[5px]">
          <div className="h-[29px] flex items-center justify-between px-[2px]">
            <label htmlFor="reference">Reference</label>
            <div className="relative flex">
              <input
                id="reference" value={reference}
                onChange={e => setReference(e.target.value)}
                className="peer w-[125px] h-4 px-[2px] bg-white border border-[#b5cfe7] border-t-[#6f8fb0] outline-none"
              />
              {!reference && <span className="absolute left-[3px] top-[3px] w-px h-[10px] bg-black peer-focus:hidden" />}
            </div>
          </div>
          <section className="flex-1 min-h-0 flex flex-col bg-[#fbfaf9] border border-[#8e8a88]">
            <div className="h-4 flex items-center justify-between bg-[#d6d1ce] border-b border-[#8e8a88] pl-[2px] pr-px">
              <h3>Sway brace types</h3>
              <button type="button" aria-label="Help"><Small name="help" className="size-[13px]" /></button>
            </div>
            <div className="h-[22px] flex items-center pt-[2px] pl-1">
              <IconButton name="add" className="w-[18px]" />
              <IconButton name="remove" className="w-[18px]" />
              <IconButton name="duplicate" className="w-[18px]" />
              <Divider className="h-3 mx-[2px]" />
              <IconButton name="up" className="w-[18px]" />
              <IconButton name="down" className="w-[18px]" />
            </div>
            <div className="flex-1 mx-1 mb-1 bg-white border border-[#a3a1a0]">
              <table className="w-full table-fixed border-collapse">
                <thead>
                  <tr className="h-[17px] bg-linear-to-b from-white to-[#f3f4f6]">
                    {columns.map(c => (
                      <th key={c.label} className={`font-normal whitespace-nowrap border-r border-[#eceef0] ${c.className}`}>{c.label}</th>
                    ))}
                  </tr>
                </thead>
                <tbody />
              </table>
            </div>
          </section>
        </div>
        <div className="w-[31px] flex flex-col items-center border-l border-[#c9c5c2] my-1 pt-1">
          <IconButton name="left" className="h-4" />
          <span className="w-5 h-px bg-[#cfcbc8] mt-[5px]" />
          <IconButton name="importDisk" className="h-[25px]" />
          <IconButton name="exportDisk" className="h-[25px]" />
          <IconButton name="exportDoc" label="Export" className="h-[25px]" />
        </div>
      </div>
      <div className="h-[27px] flex items-center justify-between px-[5px] bg-[#e3dfdc] border-t border-[#d3cfcc] shrink-0">
        <button type="button" className="w-[44px] h-4 flex items-center justify-center rounded-xs border border-[#3ba3cb] bg-linear-to-b from-[#f4f8fa] to-[#d5dde2] shadow-[inset_0_0_0_1px_#a5dcf0]">Accept</button>
        <button type="button" className="w-[40px] h-4 flex items-center justify-center rounded-xs border border-[#8b8988] bg-linear-to-b from-[#f5f5f5] to-[#dcdcdc]">Cancel</button>
      </div>
    </div>
  )
}

function Grip({ className }) {
  return (
    <span className={`flex items-center justify-center shrink-0 gap-[2px] ${className}`}>
      {[0, 1, 2, 3].map(i => <i key={i} className="size-px bg-[#555] outline outline-[#999]" />)}
    </span>
  )
}

export default function App() {
  return (
    <div className="relative h-screen flex flex-col overflow-hidden bg-[#bfbdbd] text-[#222] text-[9px] leading-3 font-[Lato,'Liberation_Sans',Arial,sans-serif]">
      <Header />
      <Ribbon />
      <div className="flex-1 min-h-0 flex pt-[4px] pr-1 pb-[5px] pl-1">
        <aside className="w-[365px] flex flex-col shrink-0">
          <FloorPlans />
          <Grip className="h-[6px]" />
          <View3D />
        </aside>
        <Grip className="w-[6px] flex-col" />
        <Workspace />
      </div>
      <SwayBracesDialog />
      <svg width="11" height="16" viewBox="0 0 11 16" className="absolute left-[597px] top-[321px]" aria-hidden="true">
        <path d="M1 1v12l3-3 2 4 2-1-2-4h4z" fill="#fff" stroke="#444" />
      </svg>
    </div>
  )
}
